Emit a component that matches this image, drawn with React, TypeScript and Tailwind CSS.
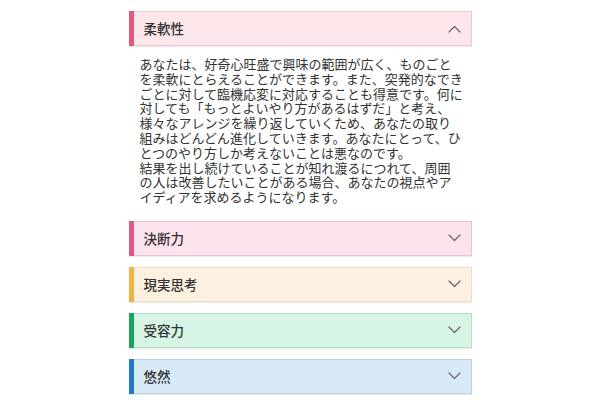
import React from "react";

type Item = {
  title: string;
  bg: string;
  bar: string;
  open?: boolean;
};

const items: Item[] = [
  { title: "柔軟性", bg: "bg-[#fde7eb] border-[#ecc8cf]", bar: "bg-[#e2587b]", open: true },
  { title: "決断力", bg: "bg-[#fce3ee] border-[#e9c3d2]", bar: "bg-[#e0588a]" },
  { title: "現実思考", bg: "bg-[#fdf0e1] border-[#efdcc4]", bar: "bg-[#f0b443]" },
  { title: "受容力", bg: "bg-[#d6f5e4] border-[#b6dfc9]", bar: "bg-[#19a560]" },
  { title: "悠然", bg: "bg-[#d9eaf7] border-[#bad1e5]", bar: "bg-[#2479c4]" },
];

// wrapped the same way as the original page
const lines = [
  "あなたは、好奇心旺盛で興味の範囲が広く、ものごと",
  "を柔軟にとらえることができます。また、突発的なでき",
  "ごとに対して臨機応変に対応することも得意です。何に",
  "対しても「もっとよいやり方があるはずだ」と考え、",
  "様々なアレンジを繰り返していくため、あなたの取り",
  "組みはどんどん進化していきます。あなたにとって、ひ",
  "とつのやり方しか考えないことは悪なのです。",
  "結果を出し続けていることが知れ渡るにつれて、周囲",
  "の人は改善したいことがある場合、あなたの視点やア",
  "イディアを求めるようになります。",
];

const Chevron = ({ up }: { up?: boolean }) => (
  <svg width="13" height="8" viewBox="0 0 13 8" fill="none" className="text-[#666]">
    <path
      d={up ? "M1 7L6.5 1.5L12 7" : "M1 1L6.5 6.5L12 1"}
      stroke="currentColor"
      strokeWidth="1.2"
      strokeLinecap="round"
      strokeLinejoin="round"
    />
  </svg>
);

const Header = ({ item }: { item: Item }) => (
  <div className={`flex h-[35px] items-stretch border ${item.bg} shadow-[0_1px_1px_rgba(0,0,0,0.08)]`}>
    <div className={`w-[5px] -my-px -ml-px ${item.bar}`} />
    <div className="flex flex-1 items-center justify-between pl-[10px] pr-[10px]">
      <span className="text-[13.5px] font-medium text-[#333]">{item.title}</span>
      <Chevron up={item.open} />
    </div>
  </div>
);

export default function App() {
  return (
    <div
      className="w-[600px] h-[400px] overflow-hidden bg-white"
      style={{ fontFamily: '"Noto Sans CJK JP", "Noto Sans", sans-serif' }}
    >
      <div className="mx-auto w-[343px] pt-[11px] flex flex-col">
        <Header item={items[0]} />
        <div className="pl-[11px] pt-[11px] pb-[16px] text-[13px] leading-[14.8px] text-[#333]">
          {lines.map((l, i) => (
            <div key={i} className="whitespace-nowrap">
              {l}
            </div>
          ))}
        </div>
        <div className="flex flex-col gap-[11px]">
          {items.slice(1).map((it) => (
            <Header key={it.title} item={it} />
          ))}
        </div>
      </div>
    </div>
  );
}
